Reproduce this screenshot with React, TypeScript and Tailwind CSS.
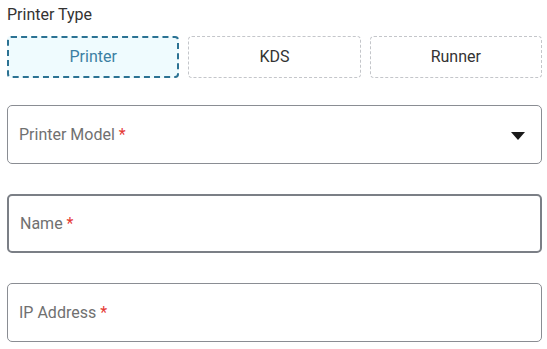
import { useState } from 'react';

const types = ['Printer', 'KDS', 'Runner'];

function Field({ label, focused, select }: { label: string; focused?: boolean; select?: boolean }) {
  return (
    <div
      className={`flex items-center justify-between h-[59px] rounded-[5px] px-[11px] bg-white ${
        focused ? 'border-2 border-[#7b7f86]' : 'border border-[#8a8d93]'
      }`}
    >
      <span className="text-[16px] text-[#707070]">
        {label} <span className="text-[#e53935]">*</span>
      </span>
      {select && (
        <svg width="14" height="8" viewBox="0 0 14 8" className="mr-[5px] mt-[3px]">
          <path d="M0 0h14L7 8z" fill="#1a1a1a" />
        </svg>
      )}
    </div>
  );
}

export default function App() {
  const [type, setType] = useState('Printer');

  return (
    <div className="w-[547px] h-[349px] bg-white pl-[7px] pr-[5px] pt-[4px] font-['Roboto',sans-serif] overflow-hidden">
      <div className="text-[16px] text-[#333] leading-[22px]">Printer Type</div>
      <div className="grid grid-cols-3 gap-[9px] mt-[10px]">
        {types.map((t) => (
          <button
            key={t}
            onClick={() => setType(t)}
            className={`h-[42px] rounded-[4px] text-[16px] ${
              type === t
                ? 'border-2 border-dashed border-[#2b7293] bg-[#effbfe] text-[#3b7fa3]'
                : 'border border-dashed border-[#c4c6ca] bg-white text-[#333]'
            }`}
          >
            {t}
          </button>
        ))}
      </div>
      <div className="flex flex-col mt-[27px] gap-[30px]">
        <Field label="Printer Model" select />
        <Field label="Name" focused />
        <Field label="IP Address" />
      </div>
    </div>
  );
}
